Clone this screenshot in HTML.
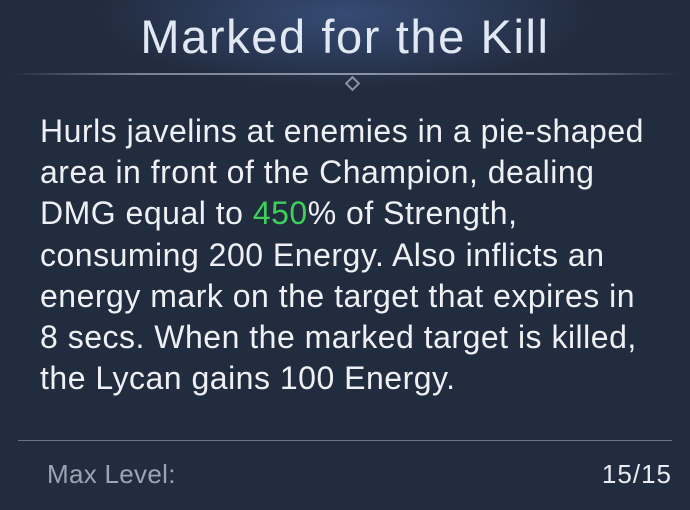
<!DOCTYPE html>
<html><head><meta charset="utf-8"><style>
body{margin:0;width:690px;height:510px;overflow:hidden;background:#222c3f;font-family:"Liberation Sans",sans-serif;position:relative}
.glow{position:absolute;left:95px;top:-60px;width:500px;height:150px;background:radial-gradient(ellipse at center,rgba(70,100,160,0.55),rgba(34,44,63,0) 70%)}
.title{position:absolute;top:9px;left:0;width:690px;text-align:center;font-size:47px;color:#e2e8f3;letter-spacing:1.6px}
.line{position:absolute;top:73px;left:10px;width:670px;height:2px;background:linear-gradient(90deg,rgba(120,130,150,0),#7a8496 20%,#8a93a3 50%,#7a8496 80%,rgba(120,130,150,0))}
.dia{position:absolute;left:347px;top:78px;width:7px;height:7px;border:2px solid #8a93a3;transform:rotate(45deg)}
.txt{position:absolute;top:111px;left:40px;font-size:32px;line-height:41.2px;color:#eef0f4;white-space:nowrap;letter-spacing:0.5px}
.g{color:#3fd05a}
.bl{position:absolute;top:440px;left:18px;width:654px;height:1px;background:#6a7487}
.ml{position:absolute;top:459px;left:47px;font-size:26px;color:#9ba4b4;letter-spacing:0.3px}
.lv{position:absolute;top:459px;right:18px;font-size:26px;color:#e8ecf2;letter-spacing:1px}
</style></head><body>
<div class="glow"></div>
<div class="title">Marked for the Kill</div>
<div class="line"></div><div class="dia"></div>
<div class="txt">Hurls javelins at enemies in a pie-shaped<br>area in front of the Champion, dealing<br>DMG equal to <span class="g">450</span>% of Strength,<br>consuming 200 Energy. Also inflicts an<br>energy mark on the target that expires in<br>8 secs. When the marked target is killed,<br>the Lycan gains 100 Energy.</div>
<div class="bl"></div>
<div class="ml">Max Level:</div>
<div class="lv">15/15</div>
</body></html>
